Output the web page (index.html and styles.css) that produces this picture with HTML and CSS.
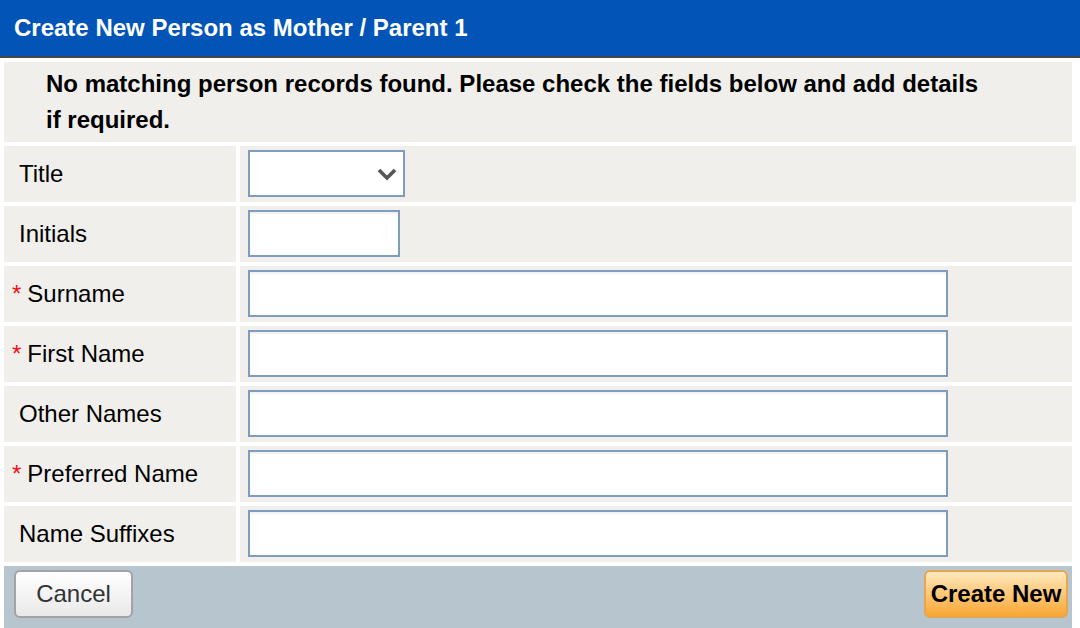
FILE: index.html
```html
<!DOCTYPE html>
<html lang="en">
<head>
<meta charset="utf-8">
<title>Create New Person</title>
<link rel="stylesheet" href="styles.css">
</head>
<body>
<header class="titlebar">Create New Person as Mother / Parent 1</header>
<main class="content">
  <div class="notice">No matching person records found. Please check the fields below and add details if required.</div>
  <div class="form">
    <div class="row row-wide">
      <div class="label">Title</div>
      <div class="value">
        <span class="select-wrap">
          <select class="select"><option></option></select>
          <svg class="chevron" width="20" height="14" viewBox="0 0 20 14"><path d="M2 3 L10 11 L18 3" fill="none" stroke="#555" stroke-width="3.6"/></svg>
        </span>
      </div>
    </div>
    <div class="row">
      <div class="label">Initials</div>
      <div class="value"><input class="input input-short" type="text"></div>
    </div>
    <div class="row">
      <div class="label"><span class="req">*</span>Surname</div>
      <div class="value"><input class="input input-long" type="text"></div>
    </div>
    <div class="row">
      <div class="label"><span class="req">*</span>First Name</div>
      <div class="value"><input class="input input-long" type="text"></div>
    </div>
    <div class="row">
      <div class="label">Other Names</div>
      <div class="value"><input class="input input-long" type="text"></div>
    </div>
    <div class="row">
      <div class="label"><span class="req">*</span>Preferred Name</div>
      <div class="value"><input class="input input-long" type="text"></div>
    </div>
    <div class="row">
      <div class="label">Name Suffixes</div>
      <div class="value"><input class="input input-long" type="text"></div>
    </div>
  </div>
  <div class="actions">
    <button class="btn btn-cancel" type="button">Cancel</button>
    <button class="btn btn-create" type="button">Create New</button>
  </div>
</main>
</body>
</html>
```

FILE: styles.css
```css
* { box-sizing: border-box; }
html, body {
  margin: 0;
  padding: 0;
  background: #ffffff;
  overflow: hidden;
}
body {
  width: 1080px;
  height: 628px;
  font-family: "Liberation Sans", Arial, Helvetica, sans-serif;
  font-size: 24px;
  color: #000;
}
.titlebar {
  height: 58px;
  background: #0255b7;
  border-bottom: 2px solid #464646;
  color: #fff;
  font-weight: bold;
  font-size: 24px;
  line-height: 56px;
  padding-left: 14px;
}
.content {
  padding: 4px 8px 0 4px;
}
.notice {
  background: #f0efeb;
  height: 80px;
  padding: 4px 80px 4px 42px;
  font-weight: bold;
  font-size: 24px;
  line-height: 36px;
}
.form {
  display: flex;
  flex-direction: column;
  gap: 4px;
  margin-top: 4px;
}
.row {
  display: flex;
  gap: 4px;
  height: 56px;
}
.row-wide {
  margin-right: -4px;
}
.label {
  width: 232px;
  flex: none;
  background: #f0efeb;
  display: flex;
  align-items: center;
  padding-left: 15px;
  white-space: nowrap;
}
.req {
  color: #f21016;
  margin-left: -7px;
  margin-right: 6px;
}
.value {
  flex: 1;
  background: #f0efeb;
  display: flex;
  align-items: flex-start;
  padding: 4px 0 0 8px;
}
.input {
  height: 47px;
  border: 2px solid #7f9bbd;
  background: #fff;
  box-shadow: inset 0 2px 2px rgba(0,0,0,0.06);
  outline: none;
  margin: 0;
  padding: 0 6px;
  font: inherit;
}
.input-short { width: 152px; }
.input-long { width: 700px; }
.select-wrap {
  position: relative;
  display: inline-block;
  width: 157px;
  height: 47px;
}
.select {
  -webkit-appearance: none;
  appearance: none;
  width: 157px;
  height: 47px;
  border: 2px solid #7f9bbd;
  border-radius: 0;
  background: #fff;
  margin: 0;
  font: inherit;
  outline: none;
}
.chevron {
  position: absolute;
  right: 8px;
  top: 17px;
}
.actions {
  margin-top: 4px;
  height: 62px;
  background: #b7c5cf;
  display: flex;
  justify-content: space-between;
  align-items: flex-start;
  padding: 4px 4px 0 10px;
}
.btn {
  height: 48px;
  border-radius: 6px;
  font-family: "Liberation Sans", Arial, Helvetica, sans-serif;
  font-size: 24px;
  padding: 0;
  margin: 0;
  cursor: pointer;
}
.btn-cancel {
  width: 119px;
  color: #333;
  border: 2px solid #a3a3a3;
  background: linear-gradient(#ffffff, #e9e9e9);
}
.btn-create {
  width: 144px;
  color: #000;
  font-weight: bold;
  border: 2px solid #e5a552;
  background: linear-gradient(#fee8bd, #f9a734);
}
```
